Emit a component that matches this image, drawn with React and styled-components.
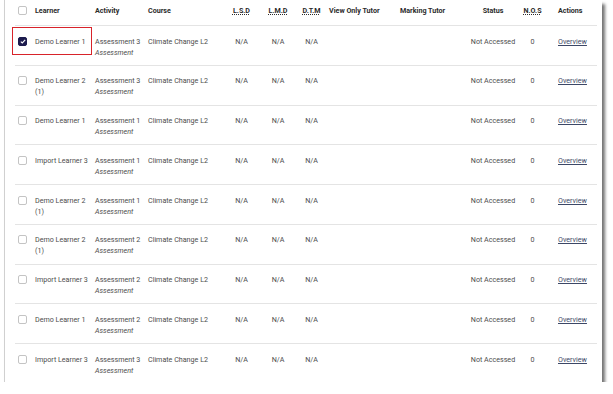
import styled, { createGlobalStyle } from "styled-components";

const GlobalStyle = createGlobalStyle`
  body {
    margin: 0;
    background: #fff;
    font-family: Roboto, "Liberation Sans", sans-serif;
  }
`;

const COLUMNS = "17px 60px 53px 80px 33px 40px 27px 72px 67px 58px 21px 54px";

const Card = styled.div`
  width: 598px;
  height: 382px;
  margin-left: 4px;
  background: #fff;
  border-left: 1px solid #d0d0d0;
  box-shadow: 3px 4px 3px rgba(0, 0, 0, 0.55);
  padding: 0 5px 0 10px;
  box-sizing: border-box;
  overflow: hidden;
`;

const Row = styled.div`
  position: relative;
  display: grid;
  grid-template-columns: ${COLUMNS};
  height: ${({ $header }) => ($header ? "26px" : "39.75px")};
  box-sizing: border-box;
  border-bottom: 1px solid #e4e4e4;
  font-size: 7.15px;
  line-height: 11px;
  color: ${({ $header }) => ($header ? "#2b2b2b" : "#4d4d4d")};
  font-weight: ${({ $header }) => ($header ? 700 : 400)};

  &:last-child {
    border-bottom: none;
  }
`;

const Cell = styled.div`
  padding: ${({ $header }) => ($header ? "5px" : "9.5px")}
    0 0 ${({ $pad }) => $pad ?? 3}px;
  text-align: ${({ $center }) => ($center ? "center" : "left")};
  white-space: ${({ $nowrap }) => ($nowrap ? "nowrap" : "normal")};
`;

const Box = styled.span`
  width: 9px;
  height: 9px;
  margin-top: 1px;
  box-sizing: border-box;
  border-radius: 2px;
  border: 1px solid ${({ $checked }) => ($checked ? "#1c1b4d" : "#c4c4c4")};
  background: ${({ $checked }) => ($checked ? "#1c1b4d" : "#fff")};
  display: flex;
  align-items: center;
  justify-content: center;
`;

const Sub = styled.div`
  font-style: italic;
`;

const Abbr = styled.abbr`
  text-decoration: underline dotted;
  text-underline-offset: 1px;
`;

const Link = styled.a`
  color: #3c4766;
  text-decoration: underline;
`;

const Highlight = styled.div`
  position: absolute;
  left: -3px;
  top: 1px;
  width: 80px;
  height: 28px;
  box-sizing: border-box;
  border: 1.5px solid #d8232a;
  pointer-events: none;
`;

const Checkbox = ({ checked }) => (
  <Box $checked={checked}>
    {checked && (
      <svg width="6" height="5" viewBox="0 0 6 5">
        <path d="M0.8 2.6 L2.3 4 L5.2 0.9" fill="none" stroke="#fff" strokeWidth="1.1" />
      </svg>
    )}
  </Box>
);

const rows = [
  { learner: "Demo Learner 1", activity: "Assessment 3", checked: true },
  { learner: "Demo Learner 2 (1)", activity: "Assessment 3" },
  { learner: "Demo Learner 1", activity: "Assessment 1" },
  { learner: "Import Learner 3", activity: "Assessment 1" },
  { learner: "Demo Learner 2 (1)", activity: "Assessment 1" },
  { learner: "Demo Learner 2 (1)", activity: "Assessment 2" },
  { learner: "Import Learner 3", activity: "Assessment 2" },
  { learner: "Demo Learner 1", activity: "Assessment 2" },
  { learner: "Import Learner 3", activity: "Assessment 3" },
];

const App = () => (
  <>
    <GlobalStyle />
    <Card>
      <Row $header>
        <Cell $header>
          <Checkbox />
        </Cell>
        <Cell $header>Learner</Cell>
        <Cell $header>Activity</Cell>
        <Cell $header>Course</Cell>
        <Cell $header $center $pad={0}>
          <Abbr title="Learner Submission Date">L.S.D</Abbr>
        </Cell>
        <Cell $header $center $pad={0}>
          <Abbr title="Last Marked Date">L.M.D</Abbr>
        </Cell>
        <Cell $header $center $pad={0}>
          <Abbr title="Days To Mark">D.T.M</Abbr>
        </Cell>
        <Cell $header $pad={4} $nowrap>View Only Tutor</Cell>
        <Cell $header $nowrap>Marking Tutor</Cell>
        <Cell $header $center $pad={0}>Status</Cell>
        <Cell $header $center $pad={0}>
          <Abbr title="Number Of Submissions">N.O.S</Abbr>
        </Cell>
        <Cell $header $pad={15}>Actions</Cell>
      </Row>
      {rows.map((r, i) => (
        <Row key={i}>
          {r.checked && <Highlight />}
          <Cell>
            <Checkbox checked={r.checked} />
          </Cell>
          <Cell>{r.learner}</Cell>
          <Cell $nowrap>
            {r.activity}
            <Sub>Assessment</Sub>
          </Cell>
          <Cell $nowrap>Climate Change L2</Cell>
          <Cell $center $pad={0}>N/A</Cell>
          <Cell $center $pad={0}>N/A</Cell>
          <Cell $center $pad={0}>N/A</Cell>
          <Cell />
          <Cell />
          <Cell $center $pad={0} $nowrap>Not Accessed</Cell>
          <Cell $center $pad={0}>0</Cell>
          <Cell $pad={15}>
            <Link href="#">Overview</Link>
          </Cell>
        </Row>
      ))}
    </Card>
  </>
);

export default App;
